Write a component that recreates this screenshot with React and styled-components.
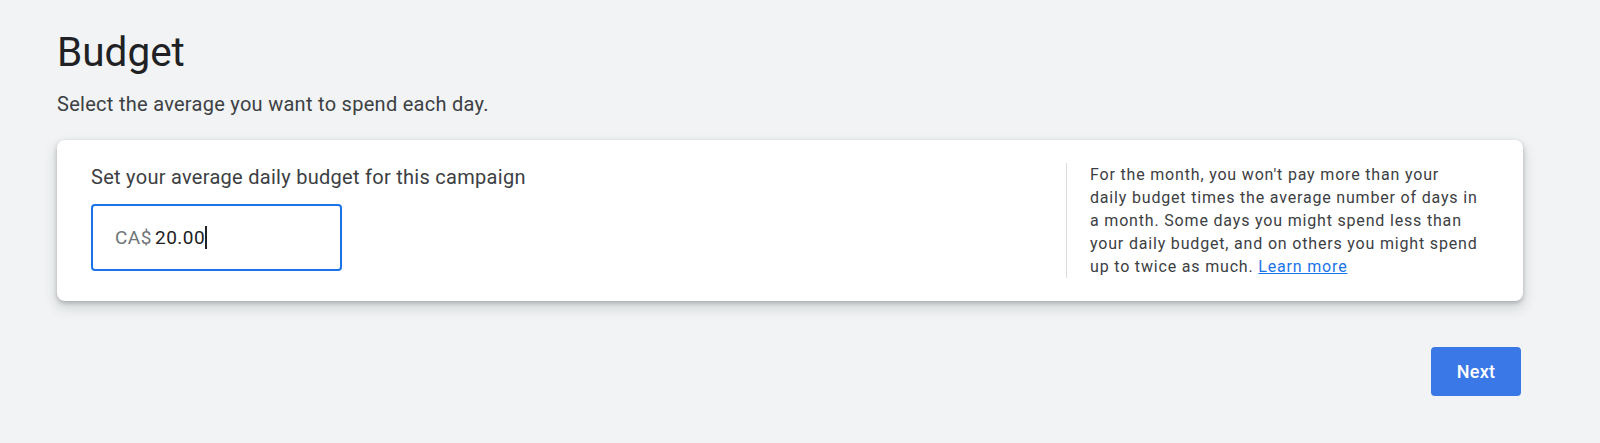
import styled, { createGlobalStyle } from 'styled-components';

const GlobalStyle = createGlobalStyle`
	html, body {
		margin: 0;
		padding: 0;
		background: #f1f3f4;
	}
	body {
		font-family: Roboto, 'Liberation Sans', Arial, sans-serif;
		color: #202124;
	}
`;

const HELP_LINES = [
	"For the month, you won't pay more than your",
	'daily budget times the average number of days in',
	'a month. Some days you might spend less than',
	'your daily budget, and on others you might spend',
];

export default function App() {
	return (
		<>
			<GlobalStyle />
			<Page>
				<Title>Budget</Title>
				<Subtitle>Select the average you want to spend each day.</Subtitle>
				<Card>
					<Main>
						<Label>Set your average daily budget for this campaign</Label>
						<InputBox>
							<Currency>CA$</Currency>
							<Amount>20.00</Amount>
							<Caret />
						</InputBox>
					</Main>
					<Aside>
						<Help>
							{HELP_LINES.map((line) => (
								<span key={line}>
									{line}
									<br />
								</span>
							))}
							up to twice as much. <HelpLink href="#">Learn more</HelpLink>
						</Help>
					</Aside>
				</Card>
				<Footer>
					<NextButton>Next</NextButton>
				</Footer>
			</Page>
		</>
	);
}

const Page = styled.div`
	min-height: 443px;
	box-sizing: border-box;
	padding: 28px 77px 0 57px;
`;

const Title = styled.h1`
	margin: 0;
	font-size: 40.5px;
	font-weight: 400;
	line-height: 48px;
	color: #202124;
`;

const Subtitle = styled.p`
	margin: 16px 0 0;
	font-size: 20px;
	line-height: 24px;
	letter-spacing: 0.28px;
	color: #3c4043;
`;

const Card = styled.div`
	display: flex;
	margin-top: 24px;
	height: 161px;
	box-sizing: border-box;
	background: #fff;
	border-radius: 8px;
	box-shadow: 0 2px 4px rgba(60, 64, 67, 0.3), 0 6px 12px 2px rgba(60, 64, 67, 0.15);
`;

const Main = styled.div`
	flex: 1;
	padding: 24px 34px;
`;

const Label = styled.div`
	font-size: 20px;
	line-height: 26px;
	letter-spacing: 0.28px;
	color: #3c4043;
`;

const InputBox = styled.div`
	display: flex;
	align-items: center;
	width: 251px;
	height: 67px;
	box-sizing: border-box;
	margin-top: 14px;
	padding: 0 22px;
	border: 2px solid #1a73e8;
	border-radius: 4px;
	font-size: 19px;
	letter-spacing: 0.5px;
`;

const Currency = styled.span`
	color: #70757a;
	margin-right: 3px;
`;

const Amount = styled.span`
	color: #202124;
`;

const Caret = styled.span`
	display: inline-block;
	width: 1.5px;
	height: 23px;
	background: #202124;
`;

const Aside = styled.div`
	margin: 23px 0;
	padding: 0 30px 0 23px;
	border-left: 1px solid #dadce0;
	width: 403px;
	flex: none;
`;

const Help = styled.p`
	margin: 0;
	font-size: 16px;
	line-height: 23px;
	letter-spacing: 0.82px;
	white-space: nowrap;
	color: #3c4043;
`;

const HelpLink = styled.a`
	color: #1a73e8;
	text-decoration: underline;
`;

const Footer = styled.div`
	display: flex;
	justify-content: flex-end;
	margin-top: 46px;
	padding-right: 2px;
`;

const NextButton = styled.button`
	width: 90px;
	height: 49px;
	border: none;
	border-radius: 4px;
	background: #3b78e7;
	color: #fff;
	font-family: Roboto, 'Liberation Sans', Arial, sans-serif;
	font-size: 18px;
	font-weight: 500;
	letter-spacing: 0.3px;
	cursor: pointer;
`;
